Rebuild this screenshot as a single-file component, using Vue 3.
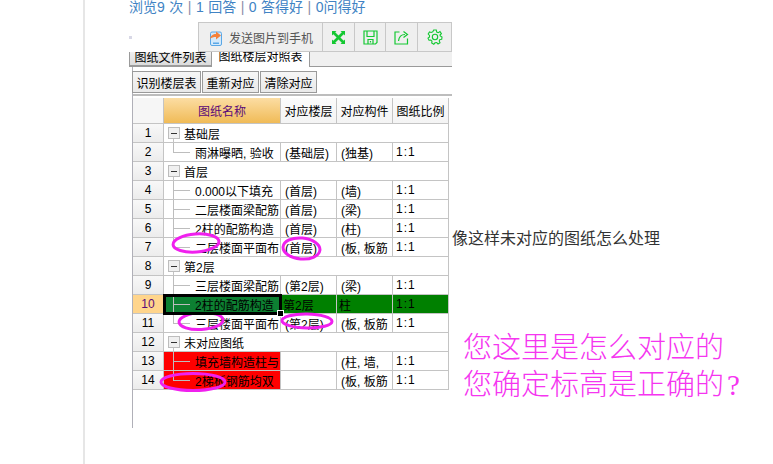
<script setup>
const cols = ['对应楼层', '对应构件', '图纸比例']
const rows = [
  { n: 1, group: '基础层' },
  { n: 2, name: '雨淋曝晒, 验收', floor: '(基础层)', part: '(独基)', ratio: '1:1', last: true },
  { n: 3, group: '首层' },
  { n: 4, name: '0.000以下填充', floor: '(首层)', part: '(墙)', ratio: '1:1' },
  { n: 5, name: '二层楼面梁配筋', floor: '(首层)', part: '(梁)', ratio: '1:1' },
  { n: 6, name: '2柱的配筋构造', floor: '(首层)', part: '(柱)', ratio: '1:1' },
  { n: 7, name: '二层楼面平面布', floor: '(首层)', part: '(板, 板筋', ratio: '1:1', last: true },
  { n: 8, group: '第2层' },
  { n: 9, name: '三层楼面梁配筋', floor: '(第2层)', part: '(梁)', ratio: '1:1' },
  { n: 10, name: '2柱的配筋构造', floor: '第2层', part: '柱', ratio: '1:1', tone: 'green' },
  { n: 11, name: '三层楼面平面布', floor: '(第2层)', part: '(板, 板筋', ratio: '1:1', last: true },
  { n: 12, group: '未对应图纸' },
  { n: 13, name: '填充墙构造柱与', floor: '', part: '(柱, 墙,', ratio: '1:1', tone: 'red' },
  { n: 14, name: '2梯板钢筋均双', floor: '', part: '(板, 板筋', ratio: '1:1', tone: 'red', last: true },
]
const rings = [
  { cx: 196, cy: 243, rx: 23, ry: 9, r: -4 },
  { cx: 301.5, cy: 248.5, rx: 18.5, ry: 10.5, r: 5 },
  { cx: 201, cy: 321, rx: 22, ry: 8.5, r: -3 },
  { cx: 307, cy: 321, rx: 25, ry: 7, r: 1 },
  { cx: 193, cy: 382, rx: 32, ry: 8.5, r: 0 },
]
</script>

<template>
  <div class="page">
    <div class="rail"></div>
    <div class="main">
      <div class="stats">浏览9 次 <i>|</i> 1 回答 <i>|</i> 0 答得好 <i>|</i> 0问得好</div>
      <div class="body">
        <section class="panel">
          <div class="topbar">
            <span class="dot"></span>
            <div class="toolbar">
              <button class="tool send">
                <svg width="14" height="17" viewBox="0 0 14 17">
                  <rect x="1.500" y="3" width="11" height="13.500" rx="1.500" fill="#d4e9fa" stroke="#5aa7e6" />
                  <rect x="4" y="13.500" width="6" height="1.500" fill="#5aa7e6" />
                  <path d="M1 10C1.500 6.500 4 5 7 5V2.500L12 6.500L7 10.500V8C4.500 8 2.500 8.500 1 10Z" fill="#f5813a" />
                </svg>
                <span>发送图片到手机</span>
              </button>
              <button class="tool w33">
                <svg width="13" height="13" viewBox="0 0 13 13" fill="#14c832">
                  <path d="M0 0H4.500L3.200 1.300L6.500 4.600L9.800 1.300L8.500 0H13V4.500L11.700 3.200L8.400 6.500L11.700 9.800L13 8.500V13H8.500L9.800 11.700L6.500 8.400L3.200 11.700L4.500 13H0V8.500L1.300 9.800L4.600 6.500L1.300 3.200L0 4.500Z" />
                </svg>
              </button>
              <button class="tool w31">
                <svg width="15" height="15" viewBox="0 0 15 15" fill="none" stroke="#14c832" stroke-width="1.200">
                  <path d="M1 1H14V12.500L12.500 14H1Z" />
                  <path d="M4 1V6.500H11V1" />
                  <path d="M5 14V9.500H10V14" />
                  <path d="M7.500 11V12.500" />
                </svg>
              </button>
              <button class="tool w32">
                <svg width="15" height="15" viewBox="0 0 15 15" fill="none" stroke="#14c832" stroke-width="1.200">
                  <path d="M5.500 2H1V14H13.500V8.500" />
                  <path d="M4.500 11C5 7 7.500 4.500 11 4.500" />
                  <path d="M9.500 1.500L13.500 4.500L9.500 7.500" />
                </svg>
              </button>
              <button class="tool w33">
                <svg width="16" height="16" viewBox="0 0 16 16" fill="none" stroke="#14c832" stroke-width="1.100">
                  <path d="M6.700 1H9.300L9.700 3L11.300 3.700L13 2.600L14.400 4.600L13 6L13.300 7L15 8L14.700 10.200L12.900 10.500L12.200 12L13 13.700L11 15L9.800 13.500L8 13.800L6.800 15.200L4.700 14L5 12.200L3.800 11L2 11.200L1 9.200L2.500 8L2.500 6.500L1.200 5L2.500 3L4.200 3.500L5.800 2.800Z" />
                  <circle cx="8" cy="8" r="2.700" />
                </svg>
              </button>
            </div>
          </div>
          <div class="tabs">
            <div class="tab off">图纸文件列表</div>
            <div class="tab on">图纸楼层对照表</div>
            <div class="tab-rest"></div>
          </div>
          <div class="content">
            <div class="actions">
              <button class="act first">识别楼层表</button>
              <button class="act">重新对应</button>
              <button class="act">清除对应</button>
            </div>
            <div class="grid">
              <div class="row head">
                <div class="cell corner"></div>
                <div class="cell title">图纸名称</div>
                <div v-for="c in cols" :key="c" class="cell colhead">{{ c }}</div>
              </div>
              <div v-for="r in rows" :key="r.n" class="row">
                <div class="cell num" :class="{ active: r.tone === 'green' }">{{ r.n }}</div>
                <div v-if="r.group" class="cell groupcell">
                  <span class="exp"><b class="box"></b></span>
                  <span class="grouplabel">{{ r.group }}</span>
                </div>
                <template v-else>
                  <div class="cell namecell" :class="r.tone">
                    <span class="elbow" :class="{ end: r.last }"></span>
                    <span class="leaf">{{ r.name }}</span>
                  </div>
                  <div class="cell val" :class="r.tone === 'green' ? 'green' : ''">{{ r.floor }}</div>
                  <div class="cell val" :class="r.tone === 'green' ? 'green' : ''">{{ r.part }}</div>
                  <div class="cell val ratio" :class="r.tone === 'green' ? 'green' : ''">{{ r.ratio }}</div>
                </template>
              </div>
            </div>
          </div>
        </section>
        <aside class="aside">
          <p class="note">像这样未对应的图纸怎么处理</p>
          <p class="remark">您这里是怎么对应的<br />您确定标高是正确的<span class="qmark">?</span></p>
        </aside>
      </div>
    </div>
    <svg class="rings" width="773" height="464" viewBox="0 0 773 464">
      <ellipse
        v-for="(e, i) in rings"
        :key="i"
        :cx="e.cx"
        :cy="e.cy"
        :rx="e.rx"
        :ry="e.ry"
        :transform="`rotate(${e.r} ${e.cx} ${e.cy})`"
        fill="none"
        stroke="#f020ee"
        stroke-width="3"
      />
    </svg>
  </div>
</template>

<style>
html,
body {
  margin: 0;
  background: #fff;
}
</style>

<style scoped>
.page {
  position: relative;
  display: flex;
  width: 773px;
  height: 464px;
  overflow: hidden;
  background: #fff;
  font-family: "Liberation Sans", "Noto Sans CJK SC", sans-serif;
  font-size: 12px;
  color: #000;
}
.rail {
  flex: none;
  width: 83px;
  border-right: 2px solid #e6e6e6;
}
.main {
  flex: 1;
  min-width: 0;
  padding-left: 44px;
}
.stats {
  height: 22px;
  font-size: 14px;
  line-height: 15px;
  word-spacing: 0.6px;
  color: #4183c4;
  white-space: nowrap;
}
.stats i {
  font-style: normal;
  color: #8c8ca8;
}
.body {
  display: flex;
}
.panel {
  flex: none;
  width: 323px;
}
.topbar {
  display: flex;
  align-items: center;
  justify-content: space-between;
  height: 30px;
}
.dot {
  width: 3px;
  height: 3px;
  background: #d8d8e6;
}
.toolbar {
  display: flex;
  box-sizing: border-box;
  width: 254px;
  height: 30px;
  background: #efefef;
  border: 1px solid #c8c8c8;
}
.tool {
  display: flex;
  align-items: center;
  justify-content: center;
  box-sizing: border-box;
  height: 100%;
  padding: 0;
  background: none;
  border: 0;
  border-right: 1px solid #c8c8c8;
  font: inherit;
  color: #555;
}
.tool:last-child {
  border-right: 0;
}
.send {
  width: 124px;
  gap: 6px;
  justify-content: flex-start;
  padding-left: 10px;
}
.w33 {
  width: 33px;
}
.w31 {
  width: 31px;
}
.w32 {
  width: 32px;
}
.tabs {
  display: flex;
  height: 15px;
}
.tab {
  box-sizing: border-box;
  height: 15px;
  overflow: hidden;
  text-align: center;
  white-space: nowrap;
}
.off {
  width: 83px;
  line-height: 13px;
  background: linear-gradient(#efefef, #dcdcdc);
  border-left: 1px solid #9a9a9a;
  border-right: 1px solid #9a9a9a;
  border-bottom: 2px solid #9a9a9a;
}
.on {
  width: 98px;
  line-height: 10px;
  background: #fff;
  border-right: 1px solid #9a9a9a;
}
.tab-rest {
  flex: 1;
  box-sizing: border-box;
  background: #f0f0f0;
  border-bottom: 1px solid #9a9a9a;
}
.content {
  box-sizing: border-box;
  height: 361px;
  margin-left: 3px;
  border-left: 1px solid #b0b0b8;
}
.actions {
  display: flex;
  gap: 1px;
  padding-top: 4px;
  height: 23px;
}
.act {
  box-sizing: border-box;
  width: 57px;
  height: 22px;
  padding: 0;
  margin: 0;
  background: linear-gradient(#f6f6f6, #e9e9e9);
  border: 1px solid #9a9a9a;
  font: inherit;
  color: #000;
  white-space: nowrap;
}
.act.first {
  width: 69px;
  margin-left: -1px;
}
.grid {
  padding-top: 2px;
  border-top: 2px solid #bdbdbd;
}
.row {
  display: grid;
  grid-template-columns: 31px 117px 56px 56px 56px;
  height: 19px;
}
.head {
  height: 26px;
}
.cell {
  box-sizing: border-box;
  display: flex;
  align-items: center;
  min-width: 0;
  overflow: hidden;
  white-space: nowrap;
  border-right: 1px solid #c4c4c4;
  border-bottom: 1px solid #c4c4c4;
}
.corner {
  background: #f6f6f6;
}
.title {
  justify-content: center;
  background: linear-gradient(#fcdda3, #f0bb57);
  color: #5a0a78;
}
.colhead {
  justify-content: center;
  background: linear-gradient(#fbfbfb, #f4f4f4);
}
.num {
  justify-content: center;
  background: linear-gradient(#f8f8f8, #ececec);
}
.num.active {
  background: #ffd58c;
  color: #5a0a78;
}
.groupcell {
  grid-column: 2 / -1;
}
.exp {
  flex: none;
  align-self: stretch;
  display: flex;
  align-items: center;
  width: 12px;
  margin-left: 4px;
  background: linear-gradient(#c4c4c4, #c4c4c4) 5px 100% / 1px 50% no-repeat;
}
.box {
  box-sizing: border-box;
  display: block;
  width: 12px;
  height: 12px;
  background: linear-gradient(#333, #333) 50% 50% / 6px 1px no-repeat, #f0f0f0;
  border: 1px solid #bdbdbd;
}
.grouplabel {
  margin-left: 4px;
}
.namecell {
  position: relative;
  overflow: visible;
}
.elbow {
  flex: none;
  align-self: stretch;
  width: 17px;
  margin-left: 9px;
  background:
    linear-gradient(#bdbdbd, #bdbdbd) 0 0 / 1px 100% no-repeat,
    linear-gradient(#bdbdbd, #bdbdbd) 0 50% / 100% 1px no-repeat;
}
.elbow.end {
  background:
    linear-gradient(#bdbdbd, #bdbdbd) 0 0 / 1px 50% no-repeat,
    linear-gradient(#bdbdbd, #bdbdbd) 0 50% / 100% 1px no-repeat;
}
.leaf {
  margin-left: 5px;
  overflow: hidden;
}
.val {
  padding-left: 4px;
}
.ratio {
  letter-spacing: 1px;
  padding-left: 3px;
}
.namecell.green {
  z-index: 1;
  background: #0d8032;
  outline: 3px solid #000;
  outline-offset: -2px;
}
.namecell.green::after {
  content: "";
  position: absolute;
  right: -4px;
  bottom: -4px;
  width: 5px;
  height: 5px;
  background: #000;
  border: 1px solid #fff;
}
.namecell.red {
  background: #ff0000;
}
.val.green {
  background: #008000;
  padding-left: 2px;
}
.ratio.green {
  padding-left: 3px;
}
.aside {
  flex: 1;
  min-width: 0;
}
.note {
  margin: 207px 0 0;
  font-size: 16px;
  line-height: 20px;
  color: #333;
  white-space: nowrap;
}
.remark {
  margin: 81px 0 0 11px;
  font-family: "Liberation Serif", "Noto Sans CJK SC", serif;
  font-size: 29px;
  line-height: 37px;
  font-weight: 300;
  color: #f535f0;
  white-space: nowrap;
}
.qmark {
  padding-left: 3px;
}
.rings {
  position: absolute;
  top: 0;
  left: 0;
  pointer-events: none;
}
</style>
